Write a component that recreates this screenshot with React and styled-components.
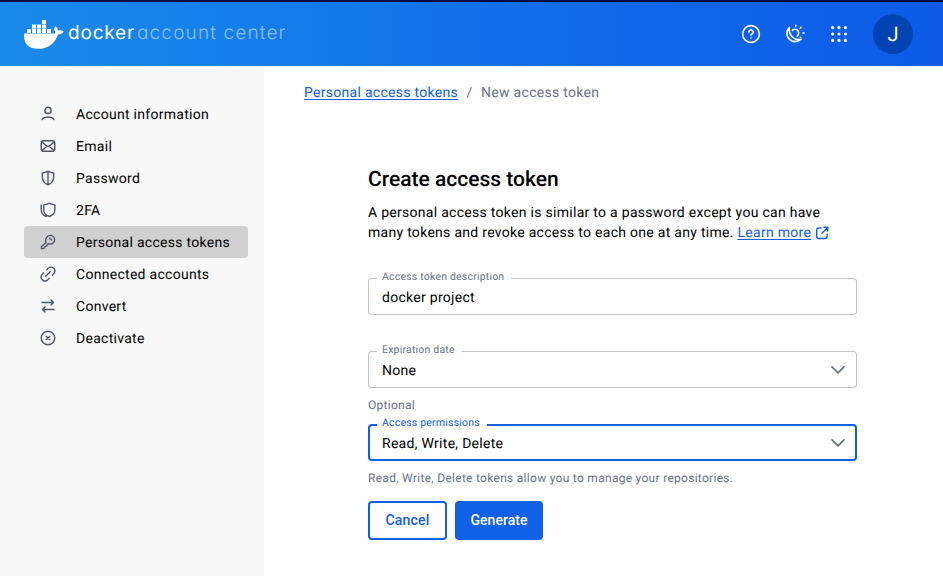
import React from "react";
import styled, { createGlobalStyle, css } from "styled-components";

const GlobalStyle = createGlobalStyle`
  *, *::before, *::after { box-sizing: border-box; }
  body {
    margin: 0;
    background: #fff;
    color: #000;
    font-family: Roboto, "Liberation Sans", sans-serif;
    font-size: 14px;
    line-height: 20px;
    letter-spacing: 0.285px;
    text-rendering: geometricPrecision;
  }
`;

const Page = styled.div`
  height: 576px;
  display: flex;
  flex-direction: column;
  overflow: hidden;
`;

const Header = styled.header`
  flex: 0 0 66px;
  display: flex;
  align-items: center;
  justify-content: space-between;
  padding: 0 30px 0 24px;
  border-top: 2px solid #000b44;
  background: linear-gradient(90deg, #1a8aeb 0%, #147ce9 30%, #0f66e9 70%, #0d5be7 100%);
  background-clip: padding-box;
`;

const Brand = styled.div`
  display: flex;
  align-items: center;
  color: #fff;
  font-family: Inter, Lato, sans-serif;
  font-feature-settings: "cv11";
  font-size: 19px;
  line-height: 24px;
`;

const BrandName = styled.span`
  margin: -2px 0 0 4px;
  width: 69px;
  font-weight: 400;
  letter-spacing: 0.8px;
`;

const BrandArea = styled.span`
  margin-top: -2px;
  font-weight: 300;
  letter-spacing: 1.15px;
  color: rgba(255, 255, 255, 0.5);
  white-space: nowrap;
`;

const HeaderActions = styled.div`
  display: flex;
  align-items: center;
  gap: 24px;
`;

const IconButton = styled.button`
  display: flex;
  padding: 0;
  border: 0;
  background: none;
  color: #fff;
`;

const Avatar = styled.div`
  width: 40px;
  height: 40px;
  display: grid;
  place-items: center;
  border-radius: 50%;
  background: #0044b3;
  color: #fff;
  font-size: 20px;
  letter-spacing: 0;
`;

const Body = styled.div`
  flex: 1;
  display: flex;
  min-height: 0;
`;

const Sidebar = styled.nav`
  flex: 0 0 264px;
  padding: 32px 16px 0 24px;
  background: #f8f8f8;
`;

const NavItem = styled.a`
  height: 32px;
  display: flex;
  align-items: center;
  gap: 20px;
  padding-left: 16px;
  border-radius: 4px;
  background: ${(p) => (p.$active ? "#d0d0d0" : "transparent")};
  svg { flex: none; color: #4b5768; }
`;

const NavText = styled.span`
  padding-top: 2px;
`;

const Main = styled.main`
  flex: 1;
  padding: 17px 40px 0;
`;

const Breadcrumbs = styled.div`
  display: flex;
  gap: 8.5px;
  color: #677285;
`;

const Link = styled.a`
  color: #1060e8;
  text-decoration: underline;
  text-decoration-thickness: 1px;
  text-underline-offset: 2px;
`;

const Form = styled.form`
  width: 489px;
  margin: 65px 0 0 64px;
`;

const Title = styled.h1`
  margin: 0;
  font-size: 21px;
  line-height: 24px;
  font-weight: 500;
  letter-spacing: 0;
`;

const Intro = styled.p`
  margin: 11px 0 35px;
  white-space: nowrap;
  svg { margin-left: 4px; vertical-align: -3px; color: #1060e8; }
`;

const Field = styled.div`
  position: relative;
  height: 37px;
  display: flex;
  align-items: center;
  justify-content: space-between;
  padding: 3px 10px 0 14px;
  border-radius: 4px;
  box-shadow: inset 0 0 0 ${(p) => (p.$focused ? "2px #1060e8" : "1px #c4c4c4")};
  svg { margin-top: -2px; color: #677285; }
`;

const Label = styled.label`
  position: absolute;
  top: -7px;
  left: 9px;
  padding: 0 7px 0 5px;
  background: #fff;
  color: ${(p) => (p.$focused ? "#1060e8" : "#677285")};
  font-size: 10.5px;
  line-height: 12px;
  letter-spacing: 0.2px;
`;

const Helper = styled.p`
  margin: ${(p) => p.$top}px 0 0;
  color: #677285;
  font-size: 12px;
  line-height: 16px;
`;

const Stack = styled.div`
  margin-top: ${(p) => p.$gap}px;
`;

const Buttons = styled.div`
  display: flex;
  gap: 8px;
  margin-top: 15px;
`;

const Button = styled.button`
  width: ${(p) => (p.$primary ? 88 : 79)}px;
  height: 39px;
  padding: 0 0 1px;
  border: 2px solid #1060e8;
  border-radius: 4px;
  font: 500 14px/20px Roboto, sans-serif;
  letter-spacing: ${(p) => (p.$primary ? 0.05 : 0.2)}px;
  ${(p) => p.$primary
    ? css`background: #1060e8; color: #fff;`
    : css`background: #fff; color: #1060e8;`}
`;

const Whale = () => (
  <svg width="40" height="30" viewBox="0 0 40 30" fill="currentColor">
    <path d="M18 1h4v4h-4zM8 5.5h4v4H8zM13 5.5h4v4h-4zM18 5.5h4v4h-4zM3 10h4v4H3zM8 10h4v4H8zM13 10h4v4h-4zM18 10h4v4h-4zM23 10h4v4h-4z" />
    <path d="M.4 14.6H29.7C31 14.6 31.4 13.8 31 12.7C29.8 10.7 30 8.8 31.2 7.4C33 8.5 34 9.8 34.1 11.5C36.3 11 38.4 11.4 39.8 12.3C38.8 14.6 36.7 15.6 33.9 15.4C31 24.2 24.3 29.8 13.8 29.8C5 29.8 .2 25.4 0 16.8C0 15.9.1 15.1.4 14.6Z" />
  </svg>
);

const Line = ({ size = 16, view = 24, stroke = 2, children }) => (
  <svg width={size} height={size} viewBox={`0 0 ${view} ${view}`} fill="none" stroke="currentColor" strokeWidth={stroke} strokeLinecap="round" strokeLinejoin="round" overflow="visible">
    {children}
  </svg>
);

const HelpIcon = () => (
  <Line size={20} view={20} stroke={1.6}>
    <circle cx="10" cy="10" r="8.4" />
    <path d="M7.9 8.1a2.15 2.15 0 1 1 3.4 1.7C10.5 10.3 10 10.7 10 11.3" />
    <circle cx="10" cy="13.9" r=".2" />
  </Line>
);

const ThemeIcon = () => (
  <Line size={20} view={20} stroke={1.6}>
    <path d="M4.4 3.4A8.1 8.1 0 1 0 16 15.3C9 16.9 3.2 11 4.4 3.4Z" />
    <path d="M7.4 6.4C9.8 4 13.5 5.6 13.7 8.8C13.8 10.3 13.2 11.2 12.3 12.1M10.7 1.2v1M16 3.4l-.9.9M17.9 9h1.2M15.3 13.2l.5.5" />
  </Line>
);

const AppsIcon = () => (
  <svg width="20" height="20" viewBox="0 0 20 20" fill="currentColor">
    {[3.6, 10, 16.4].map((y) => [3.6, 10, 16.4].map((x) => <circle key={`${x}-${y}`} cx={x} cy={y} r="1.6" />))}
  </svg>
);

const navIcons = {
  user: <Line view={16} stroke={1.4}><circle cx="8" cy="4.4" r="3.1" /><path d="M2 13.6C4.6 10.2 11.4 10.2 14 13.6" /></Line>,
  mail: <Line view={16} stroke={1.5}><rect x="1.3" y="2.7" width="13.4" height="10.6" rx="1.7" /><path d="m1.8 4 4.8 3.9c.8.7 2 .7 2.8 0L14.2 4M2 12.5l3.8-3.2M14 12.5l-3.8-3.2" /></Line>,
  shield: <Line view={16} stroke={1.4}><path d="M8 1.2c1.8 1 3.6 1.7 5.7 1.8v4.2c0 3.8-2.3 6.2-5.7 7.6-3.4-1.4-5.7-3.8-5.7-7.6V3C4.4 2.9 6.2 2.2 8 1.2ZM8 1.2v13.6" /></Line>,
  shields: <Line view={16} stroke={1.4}><path d="M9.3 1.2c1.7 1 3.5 1.6 5.6 1.7v4.5c0 3.5-2.1 5.8-5.6 7.1-3.5-1.3-5.6-3.6-5.6-7.1V2.9c2.1-.1 3.9-.7 5.6-1.7ZM1.2 3v4.5c0 3.5 1.8 5.8 5 7.1" /></Line>,
  key: <Line view={16} stroke={1.4}><path d="M5.9 8.7C4.7 4.9 6.9 1.5 10.2 1.4c2.6 0 4.4 1.9 4.4 4.3 0 3.3-3.2 5.4-6.5 4L6.2 12.2l-1.2.2-.3 1.2-1.2.9-2.1.1.1-2.1 4.4-3.8ZM9.5 4.6c1-.2 1.7.6 1.8 1.4" /></Line>,
  link: <Line view={16} stroke={1.4}><path d="m6.8 3.7 1.4-1.4c3.7-3.5 9 1.7 5.5 5.5l-1.4 1.4M9.1 12.3l-1.4 1.4c-3.7 3.5-9-1.8-5.4-5.5l1.4-1.4M5.7 10.3l4.6-4.6" /></Line>,
  swap: <Line view={16} stroke={1.4}><path d="M2 4.5h11.5M11 2l2.5 2.5L11 7M14 11.5H2.5M5 9l-2.5 2.5L5 14" /></Line>,
  close: <Line view={16} stroke={1.4}><circle cx="8" cy="8" r="6.8" /><path d="m6.2 6.2 3.6 3.6M9.8 6.2 6.2 9.8" /></Line>,
};

const NAV = [
  ["user", "Account information"],
  ["mail", "Email"],
  ["shield", "Password"],
  ["shields", "2FA"],
  ["key", "Personal access tokens"],
  ["link", "Connected accounts"],
  ["swap", "Convert"],
  ["close", "Deactivate"],
];

const ExternalIcon = () => (
  <Line size={14} view={14} stroke={1.4}>
    <path d="M6 2H3.6C2.5 2 1.7 2.8 1.7 3.9v6.7c0 1.1.8 1.9 1.9 1.9h6.6c1.1 0 1.9-.8 1.9-1.9V8.3M9 1.3h3.8v3.8M12.6 1.5 6.9 7.2" />
  </Line>
);

const Chevron = () => (
  <Line size={18} view={18} stroke={1.7}>
    <path d="m3 5.8 6 6 6-6" />
  </Line>
);

export default function App() {
  return (
    <Page>
      <GlobalStyle />
      <Header>
        <Brand>
          <Whale />
          <BrandName>docker</BrandName>
          <BrandArea>account center</BrandArea>
        </Brand>
        <HeaderActions>
          <IconButton aria-label="Help"><HelpIcon /></IconButton>
          <IconButton aria-label="Theme"><ThemeIcon /></IconButton>
          <IconButton aria-label="Apps"><AppsIcon /></IconButton>
          <Avatar>J</Avatar>
        </HeaderActions>
      </Header>
      <Body>
        <Sidebar>
          {NAV.map(([icon, text]) => (
            <NavItem key={icon} $active={icon === "key"}>
              {navIcons[icon]}
              <NavText>{text}</NavText>
            </NavItem>
          ))}
        </Sidebar>
        <Main>
          <Breadcrumbs>
            <Link>Personal access tokens</Link>
            <span>/</span>
            <span>New access token</span>
          </Breadcrumbs>
          <Form>
            <Title>Create access token</Title>
            <Intro>
              A personal access token is similar to a password except you can have
              <br />
              many tokens and revoke access to each one at any time. <Link>Learn more</Link>
              <ExternalIcon />
            </Intro>
            <Field>
              <Label>Access token description</Label>
              docker project
            </Field>
            <Stack $gap={36}>
              <Field>
                <Label>Expiration date</Label>
                None
                <Chevron />
              </Field>
              <Helper $top={9}>Optional</Helper>
            </Stack>
            <Stack $gap={11}>
              <Field $focused>
                <Label $focused>Access permissions</Label>
                Read, Write, Delete
                <Chevron />
              </Field>
              <Helper $top={9}>Read, Write, Delete tokens allow you to manage your repositories.</Helper>
            </Stack>
            <Buttons>
              <Button type="button">Cancel</Button>
              <Button type="button" $primary>Generate</Button>
            </Buttons>
          </Form>
        </Main>
      </Body>
    </Page>
  );
}
